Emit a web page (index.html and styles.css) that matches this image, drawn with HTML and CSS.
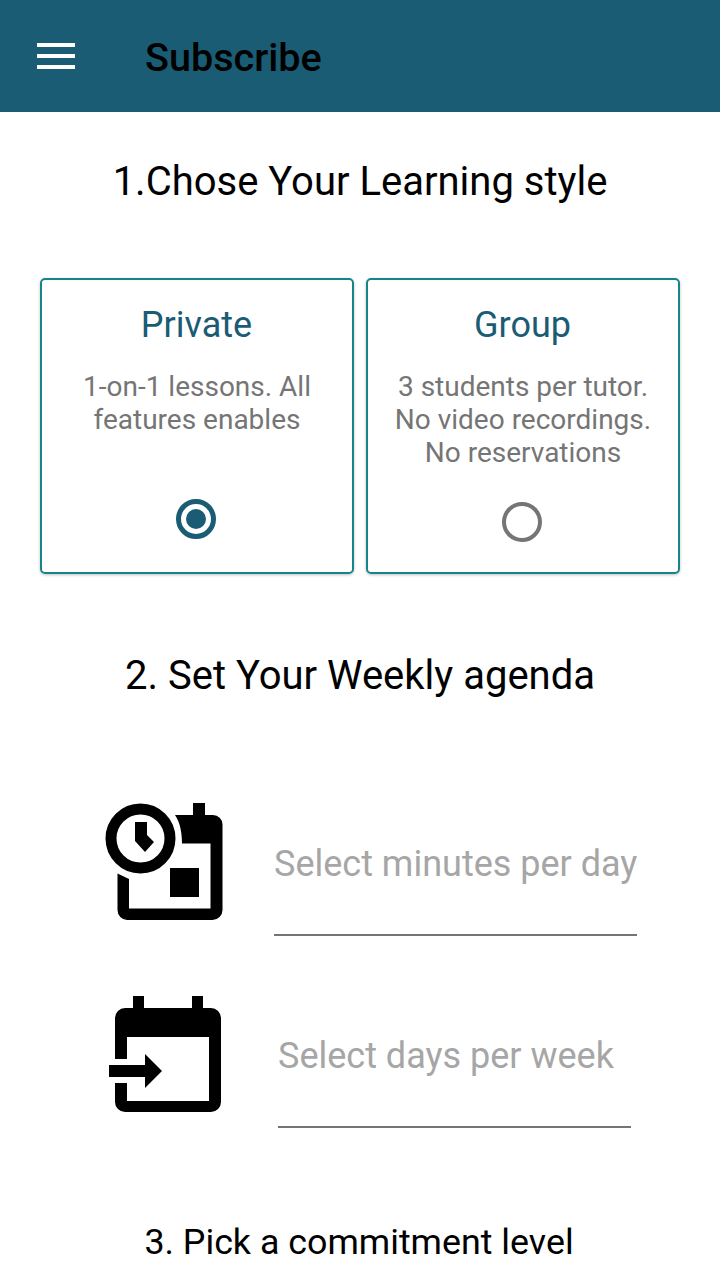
FILE: index.html
```html
<!DOCTYPE html>
<html lang="en">
<head>
<meta charset="utf-8">
<title>Subscribe</title>
<link rel="stylesheet" href="styles.css">
</head>
<body>
<div class="screen">
  <header class="appbar">
    <div class="menu"><span></span><span></span><span></span></div>
    <h1 class="appbar-title">Subscribe</h1>
  </header>
  <h2 class="step step-one">1.Chose Your Learning style</h2>
  <div class="cards">
    <div class="card">
      <div class="card-title">Private</div>
      <div class="card-text">1-on-1 lessons. All<br>features enables</div>
      <div class="radio radio-on"></div>
    </div>
    <div class="card">
      <div class="card-title">Group</div>
      <div class="card-text">3 students per tutor.<br>No video recordings.<br>No reservations</div>
      <div class="radio"></div>
    </div>
  </div>
  <h2 class="step step-two">2. Set Your Weekly agenda</h2>
  <div class="row row-minutes">
    <svg class="icon" viewBox="0 0 150 140" aria-hidden="true">
      <circle cx="50.5" cy="48.5" r="29.5" fill="none" stroke="#000" stroke-width="11"/>
      <path d="M45 32H57V45L64 52L55 62L45 51Z"/>
      <path d="M85 25H103V13H115V25H123A9.500 9.500 0 0 1 132.500 34.500V120A10 10 0 0 1 122.500 130H37A10 10 0 0 1 27.500 120V83.500L39 89V118.500H120.500V53.500H92C92 44 90.500 33 85 25Z"/>
      <rect x="80" y="78" width="29" height="29"/>
    </svg>
    <div class="field field-minutes">Select minutes per day</div>
  </div>
  <div class="row row-days">
    <svg class="icon" viewBox="0 0 150 140" aria-hidden="true">
      <path d="M43 11H54V23H102V11H113V23H121A10 10 0 0 1 131 33V117A10 10 0 0 1 121 127H35A10 10 0 0 1 25 117V98H37V116H119V52H37V74H25V33A10 10 0 0 1 35 23H43Z"/>
      <path d="M19 80H55V69L72 86L55 103V92H19Z"/>
    </svg>
    <div class="field field-days">Select days per week</div>
  </div>
  <h2 class="step step-three">3. Pick a commitment level</h2>
</div>
</body>
</html>
```
FILE: styles.css
```css
* { box-sizing: border-box; }
html, body { margin: 0; padding: 0; background: #fff; }
body { font-family: Roboto, "Liberation Sans", sans-serif; }
.screen { width: 720px; height: 1280px; overflow: hidden; background: #fff; }
.appbar { height: 112px; background: #1a5c74; display: flex; align-items: center; padding-left: 37px; }
.menu { width: 38px; display: flex; flex-direction: column; gap: 7px; margin-right: 70px; }
.menu span { display: block; height: 4px; background: #fff; }
.appbar-title { margin: 4px 0 0; font-size: 39.600px; font-weight: 500; line-height: 44px; color: #000; }
.step { margin: 0; text-align: center; font-size: 40px; font-weight: 400; line-height: 46px; color: #000; }
.step-one { margin-top: 47px; }
.cards { display: flex; gap: 12px; padding: 0 40px; margin-top: 73px; }
.card { flex: 1; height: 296px; border: 2px solid #16858a; border-radius: 5px; box-shadow: 0 1px 3px rgba(0,0,0,.25); display: flex; flex-direction: column; align-items: center; text-align: center; padding-top: 23px; }
.card-title { font-size: 36px; line-height: 44px; color: #1a5c74; margin-right: 1px; }
.card-text { font-size: 28px; line-height: 33px; color: #757575; margin-top: 23px; height: 99px; }
.radio { width: 40px; height: 40px; border-radius: 50%; border: 4px solid #757575; margin-top: 33px; margin-right: 2px; }
.radio-on { border: 5px solid #1a5c74; margin-top: 30px; position: relative; }
.radio-on::after { content: ""; position: absolute; inset: 5px; border-radius: 50%; background: #1a5c74; }
.step-two { margin-top: 79px; }
.row { display: flex; }
.icon { width: 150px; height: 140px; flex: none; fill: #000; }
.row-minutes { margin-top: 91px; padding-left: 90px; }
.row-days { margin-top: 49px; padding-left: 90px; }
.field { border-bottom: 2px solid #757575; font-size: 36px; line-height: 44px; color: #a6a6a6; white-space: nowrap; }
.field-minutes { width: 363px; margin-left: 34px; height: 146px; padding-top: 52px; }
.field-days { width: 353px; margin-left: 38px; height: 143px; padding-top: 49px; }
.step-three { margin-top: 91px; font-size: 35.800px; padding-right: 2px; }
```
